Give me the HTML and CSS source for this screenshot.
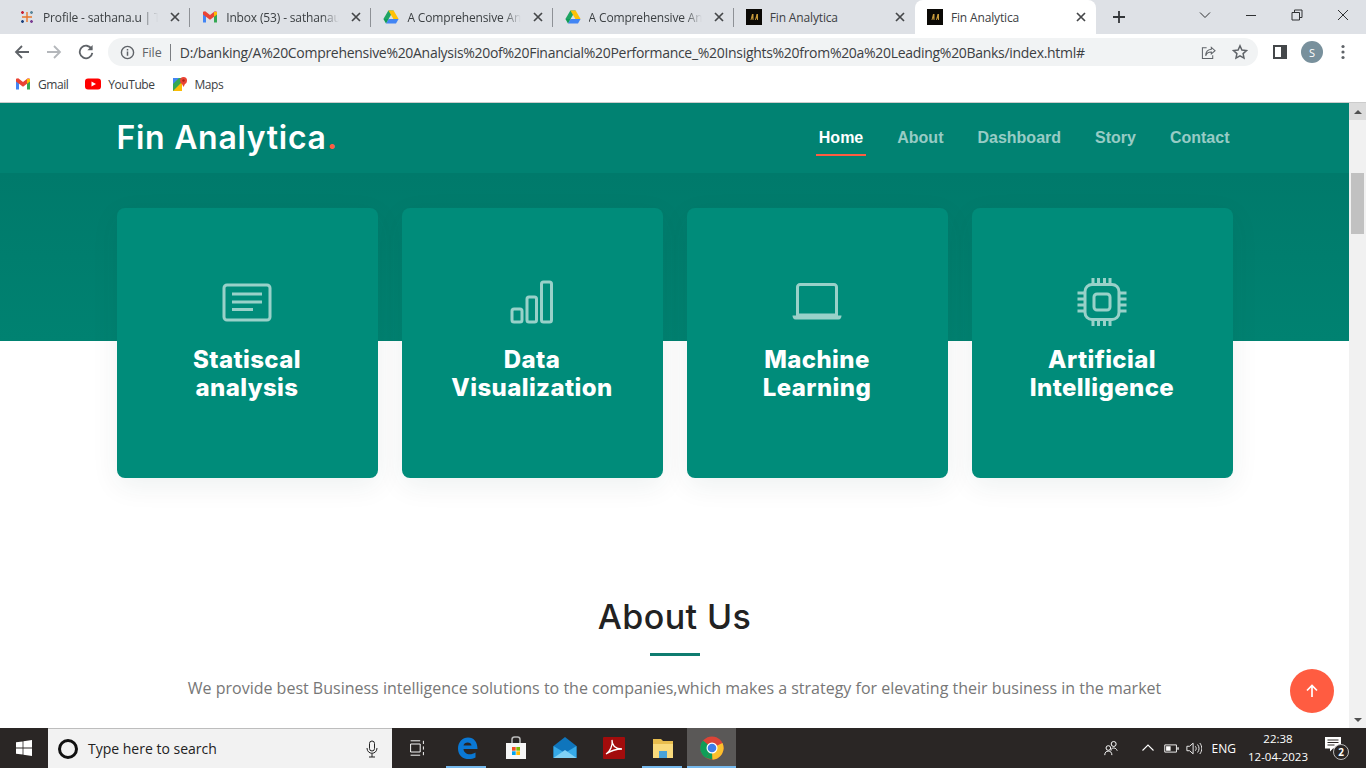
FILE: index.html
```html
<!DOCTYPE html>
<html lang="en">
<head>
<meta charset="utf-8">
<title>Fin Analytica</title>
<link rel="stylesheet" href="styles.css">
</head>
<body>
<svg class="defs" width="0" height="0" aria-hidden="true">
  <symbol id="drive" viewBox="0 0 16 16">
    <path d="M5.4 1.5h5.2L5.6 10H.4z" fill="#1fa463"/>
    <path d="M10.6 1.5 15.6 10h-5.2L5.4 1.5z" fill="#ffc107"/>
    <path d="M5.6 10h10l-2.6 4.5H3z" fill="#4285f4"/>
    <path d="M.4 10h5.2L3 14.5z" fill="#0f9d58"/>
  </symbol>
  <symbol id="gmail" viewBox="0 0 16 16">
    <path d="M1 4v9.5h3V7z" fill="#4285f4"/>
    <path d="M12 7v6.500h3V4z" fill="#34a853"/>
    <path d="M1 2.800v2.700L4 7.800 8 10.800l4-3 3-2.300V2.800L12.800 2.300 8 6 3.200 2.300z" fill="#ea4335"/>
    <path d="M12 3 15 3v2.500L12 7.800z" fill="#fbbc04"/>
  </symbol>
  <symbol id="fin" viewBox="0 0 16 16">
    <rect width="16" height="16" fill="#0b0906"/>
    <path d="M4.500 11 6 5h1.500v6H6.500V9.500H5.800L5.400 11zM9 11l1.500-6H12v6h-1V9.500h-.7l-.4 1.500z" fill="#c89a3a"/>
  </symbol>
  <symbol id="close" viewBox="0 0 10 10">
    <path d="M1 1l8 8M9 1 1 9" fill="none" stroke="#454749" stroke-width="1.700"/>
  </symbol>
</svg>

<div class="tabstrip">
  <div class="tab sep first">
    <svg class="fav" viewBox="0 0 16 16"><g fill="none" stroke-width="1.400"><path d="M8 3v10M3 8h10" stroke="#e8762c"/><path d="M3.500 2v3M2 3.500h3" stroke="#c72035"/><path d="M12.500 2v3M11 3.500h3" stroke="#5b879b"/><path d="M3.500 11v3M2 12.500h3" stroke="#1f447f"/><path d="M12.500 11v3M11 12.500h3" stroke="#7b3f94"/></g></svg>
    <span class="tab-title">Profile - sathana.u | Tal</span>
    <svg class="tab-x"><use href="#close"/></svg>
  </div>
  <div class="tab sep">
    <svg class="fav"><use href="#gmail"/></svg>
    <span class="tab-title">Inbox (53) - sathanautl</span>
    <svg class="tab-x"><use href="#close"/></svg>
  </div>
  <div class="tab sep">
    <svg class="fav"><use href="#drive"/></svg>
    <span class="tab-title">A Comprehensive Ana</span>
    <svg class="tab-x"><use href="#close"/></svg>
  </div>
  <div class="tab sep">
    <svg class="fav"><use href="#drive"/></svg>
    <span class="tab-title">A Comprehensive Ana</span>
    <svg class="tab-x"><use href="#close"/></svg>
  </div>
  <div class="tab">
    <svg class="fav"><use href="#fin"/></svg>
    <span class="tab-title plain">Fin Analytica</span>
    <svg class="tab-x"><use href="#close"/></svg>
  </div>
  <div class="tab active">
    <svg class="fav"><use href="#fin"/></svg>
    <span class="tab-title plain">Fin Analytica</span>
    <svg class="tab-x"><use href="#close"/></svg>
  </div>
  <svg class="newtab" viewBox="0 0 14 14"><path d="M7 1v12M1 7h12" stroke="#333639" stroke-width="1.800" fill="none"/></svg>
  <div class="winctl">
    <svg viewBox="0 0 12 12"><path d="M1 3.500l5 5 5-5" fill="none" stroke="#2f3133"/></svg>
    <svg viewBox="0 0 12 12"><path d="M1 6.500h10" fill="none" stroke="#2f3133"/></svg>
    <svg viewBox="0 0 12 12"><path d="M3.500 3V1h7.500v7.500H8.500M1 3.500h7.500V11H1z" fill="none" stroke="#2f3133"/></svg>
    <svg viewBox="0 0 12 12"><path d="M1 1l10 10M11 1 1 11" fill="none" stroke="#2f3133"/></svg>
  </div>
</div>

<div class="toolbar">
  <svg class="nav-ic" viewBox="0 0 16 16"><path d="M15 8H2M8 2 2 8l6 6" fill="none" stroke="#5f6368" stroke-width="1.800"/></svg>
  <svg class="nav-ic" viewBox="0 0 16 16"><path d="M1 8h13M8 2l6 6-6 6" fill="none" stroke="#b4b7bb" stroke-width="1.800"/></svg>
  <svg class="nav-ic" viewBox="0 0 16 16"><path d="M13.600 5A6.300 6.300 0 1 0 14.300 8.800" fill="none" stroke="#5f6368" stroke-width="1.800"/><path d="M14.600 1v5.200H9.400z" fill="#5f6368"/></svg>
  <div class="omnibox">
    <svg class="info" viewBox="0 0 16 16"><circle cx="8" cy="8" r="6.500" fill="none" stroke="#5f6368" stroke-width="1.500"/><path d="M8 7v4.500M8 4.200v1.600" stroke="#5f6368" stroke-width="1.600"/></svg>
    <span class="scheme">File</span>
    <span class="omni-sep"></span>
    <span class="url">D:/banking/A%20Comprehensive%20Analysis%20of%20Financial%20Performance_%20Insights%20from%20a%20Leading%20Banks/index.html#</span>
    <svg class="share" viewBox="0 0 16 16"><path d="M11 2.500 15 6l-4 3.500V7.500C7.500 7.500 5.800 9 5 11.500 5 7.500 7.500 4.800 11 4.500zM6 3H1.500v11.500H12.500V11" fill="none" stroke="#5f6368" stroke-width="1.100"/></svg>
    <svg class="star" viewBox="0 0 16 16"><path d="M8 1.800l1.900 4.200 4.600.5-3.400 3.100.9 4.500L8 11.800l-4 2.300.9-4.500L1.500 6.500l4.600-.5z" fill="none" stroke="#5f6368" stroke-width="1.500"/></svg>
  </div>
  <svg class="side" viewBox="0 0 14 14"><path d="M1 1h12v12H1z" fill="none" stroke="#44474a" stroke-width="2"/><path d="M8 1h5v12H8z" fill="#44474a"/></svg>
  <span class="avatar">S</span>
  <svg class="kebab" viewBox="0 0 4 16"><circle cx="2" cy="2.500" r="1.600"/><circle cx="2" cy="8" r="1.600"/><circle cx="2" cy="13.500" r="1.600"/></svg>
</div>

<div class="bookmarks">
  <span class="bm"><svg class="fav"><use href="#gmail"/></svg>Gmail</span>
  <span class="bm"><svg class="fav" viewBox="0 0 16 16"><rect y="2.500" width="16" height="11" rx="3" fill="#f00"/><path d="M6.500 5.500v5L11 8z" fill="#fff"/></svg>YouTube</span>
  <span class="bm"><svg class="fav" viewBox="0 0 16 16"><path d="M1 2h9v13H1z" fill="#34a853"/><path d="M1 15 10 6v9z" fill="#fbbc04"/><path d="M1 2h6L1 8z" fill="#4285f4"/><circle cx="11.500" cy="4.500" r="3.500" fill="#ea4335"/><path d="M9 6l2.500 5L14 6z" fill="#ea4335"/><circle cx="11.500" cy="4.500" r="1.200" fill="#a52714"/></svg>Maps</span>
</div>

<div class="viewport">
  <main class="page">
    <header class="site-header">
      <div class="container header-row">
        <a class="logo">Fin Analytica<span class="logo-dot">.</span></a>
        <nav class="site-nav">
          <a class="current">Home</a>
          <a>About</a>
          <a>Dashboard</a>
          <a>Story</a>
          <a>Contact</a>
        </nav>
      </div>
    </header>
    <section class="services">
      <div class="container card-grid">
        <article class="card">
          <svg class="card-ic" viewBox="0 0 50 50"><rect x="2" y="8" width="46" height="35" rx="3"/><path d="M10 17h30M10 25h30M10 32.500h21"/></svg>
          <h3>Statiscal analysis</h3>
        </article>
        <article class="card">
          <svg class="card-ic" viewBox="0 0 50 50"><rect x="5" y="32" width="10" height="13" rx="2"/><rect x="20" y="20" width="9.500" height="25" rx="2"/><rect x="34.500" y="5" width="10" height="40" rx="2"/></svg>
          <h3>Data Visualization</h3>
        </article>
        <article class="card">
          <svg class="card-ic" viewBox="0 0 50 50"><path d="M5.500 38V10a2.500 2.500 0 0 1 2.500-2.500h34a2.500 2.500 0 0 1 2.500 2.500v28z"/><path class="solid" d="M.5 38.500h49c0 2-1 4-3 4h-43c-2 0-3-2-3-4z"/></svg>
          <h3>Machine Learning</h3>
        </article>
        <article class="card">
          <svg class="card-ic" viewBox="0 0 50 50"><rect x="8" y="7.500" width="34" height="35" rx="7"/><rect x="17" y="17" width="16" height="16" rx="3"/><path d="M16 1v7M21.500 1v7M27.500 1v7M33 1v7M16 42v7M21.500 42v7M27.500 42v7M33 42v7M.5 16H8M.5 22H8M.5 28H8M.5 34H8M42 16h7.500M42 22h7.500M42 28h7.500M42 34h7.500"/></svg>
          <h3>Artificial Intelligence</h3>
        </article>
      </div>
    </section>
    <section class="about">
      <h2>About Us</h2>
      <span class="rule"></span>
      <p>We provide best Business intelligence solutions to the companies,which makes a strategy for elevating their business in the market</p>
    </section>
    <a class="to-top"><svg viewBox="0 0 14 14"><path d="M7 13V2M2 6.500 7 1.500l5 5" fill="none" stroke="#fff" stroke-width="1.700"/></svg></a>
  </main>
  <div class="scrollbar">
    <span class="arrow up"></span>
    <div class="track"><span class="thumb"></span></div>
    <span class="arrow down"></span>
  </div>
</div>

<footer class="taskbar">
  <svg class="start" viewBox="0 0 16 16"><path d="M0 2.300 6.600 1.400v6.200H0zM7.400 1.300 16 0v7.600H7.400zM0 8.400h6.600v6.200L0 13.700zM7.400 8.400H16V16l-8.600-1.300z" fill="#fff"/></svg>
  <div class="searchbox">
    <span class="cortana"></span>
    <span class="search-text">Type here to search</span>
    <svg class="mic" viewBox="0 0 12 18"><rect x="3.500" y="1" width="5" height="10" rx="2.500" fill="none" stroke="#222"/><path d="M1 8c0 7 10 7 10 0M6 13.500V17M3 17h6" fill="none" stroke="#222"/></svg>
  </div>
  <div class="apps">
    <span class="app"><svg viewBox="0 0 20 20"><g fill="none" stroke="#fff"><path d="M2 1h12M2 19h12M2 5h12v10H2zM18 1v4M18 8v4M18 15v4" stroke-width="1.200"/></g></svg></span>
    <span class="app running"><svg viewBox="0 0 24 24"><path d="M3 12.500C3 6 7.500 1.500 13 1.500c6 0 9.500 4.500 9.500 11.500H8.500c.3 5 6.500 7 12 3.500v5c-7 3.500-17.500 1.500-17.500-9zm5.500-3h8c0-4-7.500-4-8 0z" fill="#0a78d4"/></svg></span>
    <span class="app"><svg viewBox="0 0 24 24"><path d="M2 7h20v16H2z" fill="#f6f6f6"/><path d="M8 7V3.500C8 2 9 1 10.500 1h3C15 1 16 2 16 3.500V7" fill="none" stroke="#bbb" stroke-width="1.500"/><path d="M8 11h3.700v3.700H8z" fill="#f25022"/><path d="M12.300 11H16v3.700h-3.700z" fill="#7fba00"/><path d="M8 15.300h3.700V19H8z" fill="#00a4ef"/><path d="M12.300 15.300H16V19h-3.700z" fill="#ffb900"/></svg></span>
    <span class="app"><svg viewBox="0 0 24 24"><path d="M12 1 23.500 10v12H.5V10z" fill="#0f75bc"/><path d="M.5 10 12 17 23.500 10v12H.5z" fill="#35a9e8"/><path d="M.5 22 12 14l11.500 8z" fill="#7fd1f5"/></svg></span>
    <span class="app"><svg viewBox="0 0 24 24"><rect x="1" y="1" width="22" height="22" rx="1" fill="#a20c0c"/><path d="M4 18c4-2 7-9 6-14 0 5 3 9 10 9-6 0-10 1-16 5z" fill="none" stroke="#fff" stroke-width="1.300"/></svg></span>
    <span class="app running"><svg viewBox="0 0 24 24"><path d="M2 3h8l2 2h10v5H2z" fill="#e8bd4e"/><path d="M2 8h20v14H2z" fill="#f9da7c"/><path d="M8 15h8v7H8z" fill="#4aa3d8"/></svg></span>
    <span class="app running selected"><svg viewBox="0 0 24 24"><circle cx="12" cy="12" r="11.500" fill="#db4437"/><path d="M12 12 22.500 7A11.500 11.500 0 0 1 12.500 23.500z" fill="#fbc02d"/><path d="M12 12 6 22A11.500 11.500 0 0 1 3 4.500z" fill="#0f9d58"/><path d="M12 12 12.500 23.500 6 22z" fill="#0f9d58"/><path d="M12 12 12.500 23.500 18 22z" fill="#fbc02d"/><circle cx="12" cy="12" r="5.500" fill="#fff"/><circle cx="12" cy="12" r="4.300" fill="#3f7de8"/></svg></span>
  </div>
  <div class="tray">
    <svg class="people" viewBox="0 0 18 18"><g fill="none" stroke="#fff" stroke-width="1.100"><circle cx="12" cy="4.500" r="2.800"/><path d="M9 12c0-2 1-3 3-3s3 1 4 3"/><circle cx="6" cy="9" r="2.600"/><path d="M2 17c0-3 1.500-4.500 4-4.500s4 1.500 4 4.500"/></g></svg>
    <svg class="chev" viewBox="0 0 12 8"><path d="M.5 6.500 6 1l5.500 5.500" fill="none" stroke="#fff" stroke-width="1.100"/></svg>
    <svg class="batt" viewBox="0 0 16 10"><path d="M.5 1h13v8H.5z" fill="none" stroke="#fff"/><path d="M2 2.500h5v5H2z" fill="#fff"/><path d="M14.500 3.500H16v3h-1.500z" fill="#fff"/></svg>
    <svg class="vol" viewBox="0 0 18 14"><path d="M1 4.500h3L8 1v12L4 9.500H1zM10.500 4.500c1.300 1.500 1.300 3.500 0 5M13 2.500c2.200 2.800 2.200 6.200 0 9M15.500 .8c3 3.800 3 8.600 0 12.400" fill="none" stroke="#fff"/></svg>
    <span class="lang">ENG</span>
    <div class="clock"><span>22:38</span><span>12-04-2023</span></div>
    <div class="notif">
      <svg viewBox="0 0 16 15"><path d="M0 0h16v11.500H8L5 14.500v-3H0z" fill="#fff"/><path d="M2.500 3h11M2.500 5.500h11M2.500 8h7" stroke="#2a2625"/></svg>
      <span class="notif-count">2</span>
    </div>
  </div>
</footer>
</body>
</html>
```

FILE: styles.css
```css
* { box-sizing: border-box; }
html, body { height: 100%; }
body {
  margin: 0;
  width: 1366px;
  height: 768px;
  overflow: hidden;
  display: flex;
  flex-direction: column;
  font-family: "Open Sans", "Liberation Sans", sans-serif;
  background: #fff;
}
.defs { position: absolute; }
svg { display: block; flex: none; }

/* Browser tab strip */
.tabstrip {
  height: 34px;
  flex: none;
  display: flex;
  align-items: center;
  background: #dee1e6;
  padding-left: 9px;
}
.tab {
  width: 181.2px;
  height: 34px;
  flex: none;
  display: flex;
  align-items: center;
  padding: 0 10px 0 12px;
  position: relative;
  font-size: 12px;
  color: #3c4043;
}
.tab.first { padding-left: 10px; }
.tab.sep::after {
  content: "";
  position: absolute;
  right: 0;
  top: 8px;
  height: 19px;
  width: 1px;
  background: #8e9196;
}
.tab.active {
  background: #fff;
  border-radius: 8px 8px 0 0;
}
.fav { width: 16px; height: 16px; }
.tab-title {
  flex: 1;
  min-width: 0;
  margin-left: 8px;
  white-space: nowrap;
  -webkit-mask-image: linear-gradient(to right, #000 85%, transparent 100%);
  mask-image: linear-gradient(to right, #000 85%, transparent 100%);
  letter-spacing: -0.15px;
}
.tab-title.plain { -webkit-mask-image: none; mask-image: none; }
.tab-x { width: 10px; height: 10px; margin-left: 12px; }
.newtab { width: 14px; height: 14px; margin-left: 16px; }
.winctl {
  margin-left: auto;
  display: flex;
  align-items: center;
  gap: 34px;
  padding-right: 17px;
  margin-top: -5px;
}
.winctl svg { width: 12px; height: 12px; }

/* Toolbar */
.toolbar {
  height: 36px;
  flex: none;
  display: flex;
  align-items: center;
  background: #fff;
  padding-left: 14px;
}
.nav-ic { width: 16px; height: 16px; margin-right: 16px; }
.nav-ic:nth-child(3) { margin-right: 14px; }
.omnibox {
  width: 1150px;
  height: 28px;
  border-radius: 14px;
  background: #f1f3f4;
  display: flex;
  align-items: center;
  padding-left: 12px;
  font-size: 13px;
  color: #5f6368;
}
.info { width: 15px; height: 15px; }
.scheme { margin-left: 7px; font-size: 12.5px; }
.omni-sep { width: 1px; height: 17px; background: #7b7e82; margin: 0 9px 0 8px; }
.url { color: #3c4043; white-space: nowrap; letter-spacing: -0.3px; font-size: 14px; }
.share { width: 15px; height: 15px; margin-left: auto; }
.star { width: 16px; height: 16px; margin: 0 10px 0 16px; }
.side { width: 14px; height: 14px; margin-left: 15px; }
.avatar {
  width: 22px;
  height: 22px;
  margin-left: 14px;
  border-radius: 50%;
  background: #78909c;
  color: #fff;
  font-size: 11px;
  display: flex;
  align-items: center;
  justify-content: center;
}
.kebab { width: 4px; height: 16px; margin-left: 18px; fill: #5f6368; }

/* Bookmarks */
.bookmarks {
  height: 33px;
  flex: none;
  display: flex;
  align-items: center;
  gap: 17px;
  padding: 0 0 4px 15px;
  background: #fff;
  border-bottom: 1px solid #ccc;
  font-size: 12px;
  color: #3c4043;
}
.bm { display: flex; align-items: center; gap: 7px; letter-spacing: -0.45px; }

/* Viewport */
.viewport {
  height: 625px;
  flex: none;
  display: flex;
}
.page {
  width: 1349px;
  flex: none;
  position: relative;
  overflow: hidden;
  background: linear-gradient(to bottom, #007a6b 70px, #008271 238px, #fff 238px);
}
.container { width: 1116px; margin: 0 auto; }

.site-header { height: 70px; background: #018272; }
.header-row {
  height: 70px;
  display: flex;
  align-items: center;
  justify-content: space-between;
}
.logo {
  font-family: Inter, "Liberation Sans", sans-serif;
  font-size: 32px;
  line-height: 36px;
  font-weight: 600;
  color: #fff;
  letter-spacing: 0.7px;
}
.logo-dot { color: #ff5c41; }
.site-nav {
  display: flex;
  gap: 28px;
  font-family: "Liberation Sans", Arial, sans-serif;
  font-size: 16px;
  font-weight: 700;
}
.site-nav a {
  padding: 0 3px;
  color: rgba(255, 255, 255, 0.6);
  position: relative;
}
.site-nav a.current { color: #fff; }
.site-nav a.current::after {
  content: "";
  position: absolute;
  left: 0;
  right: 0;
  bottom: -9px;
  height: 2px;
  background: #ff5c41;
}

.services { padding-top: 35px; }
.card-grid {
  display: grid;
  grid-template-columns: repeat(4, 261px);
  gap: 24px;
}
.card {
  height: 270px;
  padding: 69px 30px 0;
  border-radius: 8px;
  background: #008c7a;
  color: #fff;
  text-align: center;
  box-shadow: 0 8px 28px rgba(0, 60, 50, 0.07);
}
.card-ic {
  width: 50px;
  height: 50px;
  margin: 0 auto 19px;
  fill: none;
  stroke: #99d1c9;
  stroke-width: 3;
}
.card-ic .solid { fill: #99d1c9; stroke: none; }
.card h3 {
  margin: 0;
  font-family: Inter, "Liberation Sans", sans-serif;
  font-size: 24px;
  line-height: 28px;
  font-weight: 800;
  letter-spacing: 0.4px;
}

.about { padding-top: 119px; text-align: center; }
.about h2 {
  margin: 0;
  font-family: Inter, "Liberation Sans", sans-serif;
  font-size: 34px;
  line-height: 40px;
  font-weight: 500;
  letter-spacing: 0.4px;
  color: #222;
}
.rule {
  display: block;
  width: 50px;
  height: 3px;
  margin: 16px auto 0;
  background: #0f7c70;
}
.about p {
  margin: 20px 0 0;
  font-size: 16px;
  line-height: 24px;
  color: #777;
}
.to-top {
  position: absolute;
  right: 15px;
  top: 566px;
  width: 44px;
  height: 44px;
  border-radius: 50%;
  background: #ff5c41;
  display: flex;
  align-items: center;
  justify-content: center;
}
.to-top svg { width: 14px; height: 14px; }

/* Scrollbar */
.scrollbar {
  width: 17px;
  flex: none;
  display: flex;
  flex-direction: column;
  background: #f1f1f1;
}
.arrow {
  height: 17px;
  flex: none;
  display: flex;
  align-items: center;
  justify-content: center;
}
.arrow.up { background: #dcdcdc; }
.arrow::before {
  content: "";
  border-left: 4px solid transparent;
  border-right: 4px solid transparent;
}
.arrow.up::before { border-bottom: 4px solid #505050; }
.arrow.down::before { border-top: 4px solid #505050; }
.track { flex: 1; padding: 53px 2px 0; }
.thumb { display: block; height: 61px; background: #c1c1c1; }

/* Taskbar */
.taskbar {
  height: 40px;
  flex: none;
  display: flex;
  align-items: center;
  background: #2a2625;
  color: #fff;
}
.start { width: 16px; height: 16px; margin: 0 16px; }
.searchbox {
  width: 344px;
  height: 40px;
  display: flex;
  align-items: center;
  background: #f2f2f2;
  border-top: 1px solid #bdbdbd;
  padding-left: 10px;
  color: #222;
  font-size: 14px;
}
.cortana {
  width: 20px;
  height: 20px;
  border: 3px solid #111;
  border-radius: 50%;
}
.search-text { margin-left: 10px; }
.mic { width: 12px; height: 18px; margin-left: auto; margin-right: 14px; }
.apps { display: flex; }
.app {
  width: 49px;
  height: 40px;
  display: flex;
  align-items: center;
  justify-content: center;
  position: relative;
}
.app svg { width: 24px; height: 24px; }
.app:first-child { width: 50px; }
.app:first-child svg { width: 16px; height: 16px; }
.app.running::after {
  content: "";
  position: absolute;
  left: 4px;
  right: 5px;
  bottom: 0;
  height: 2px;
  background: #76b9ed;
}
.app.selected { background: #5a5857; }
.app.selected::after { left: 0; right: 0; }
.tray {
  margin-left: auto;
  display: flex;
  align-items: center;
  color: #fff;
  font-size: 12px;
}
.people { width: 16px; height: 16px; }
.chev { width: 12px; height: 8px; margin-left: 23px; }
.batt { width: 15px; height: 9px; margin-left: 10px; }
.vol { width: 16px; height: 13px; margin-left: 7px; }
.lang { margin-left: 10px; }
.clock {
  margin-left: 6px;
  width: 72px;
  display: flex;
  flex-direction: column;
  align-items: center;
  font-size: 11.5px;
  line-height: 18px;
}
.notif { width: 24px; height: 23px; position: relative; margin: 0 17px 0 11px; }
.notif svg { width: 16px; height: 15px; }
.notif-count {
  position: absolute;
  right: 0;
  bottom: 0;
  width: 16px;
  height: 16px;
  border-radius: 50%;
  background: #2a2625;
  border: 1px solid #bbb;
  font-size: 10px;
  font-weight: 700;
  display: flex;
  align-items: center;
  justify-content: center;
}
```
